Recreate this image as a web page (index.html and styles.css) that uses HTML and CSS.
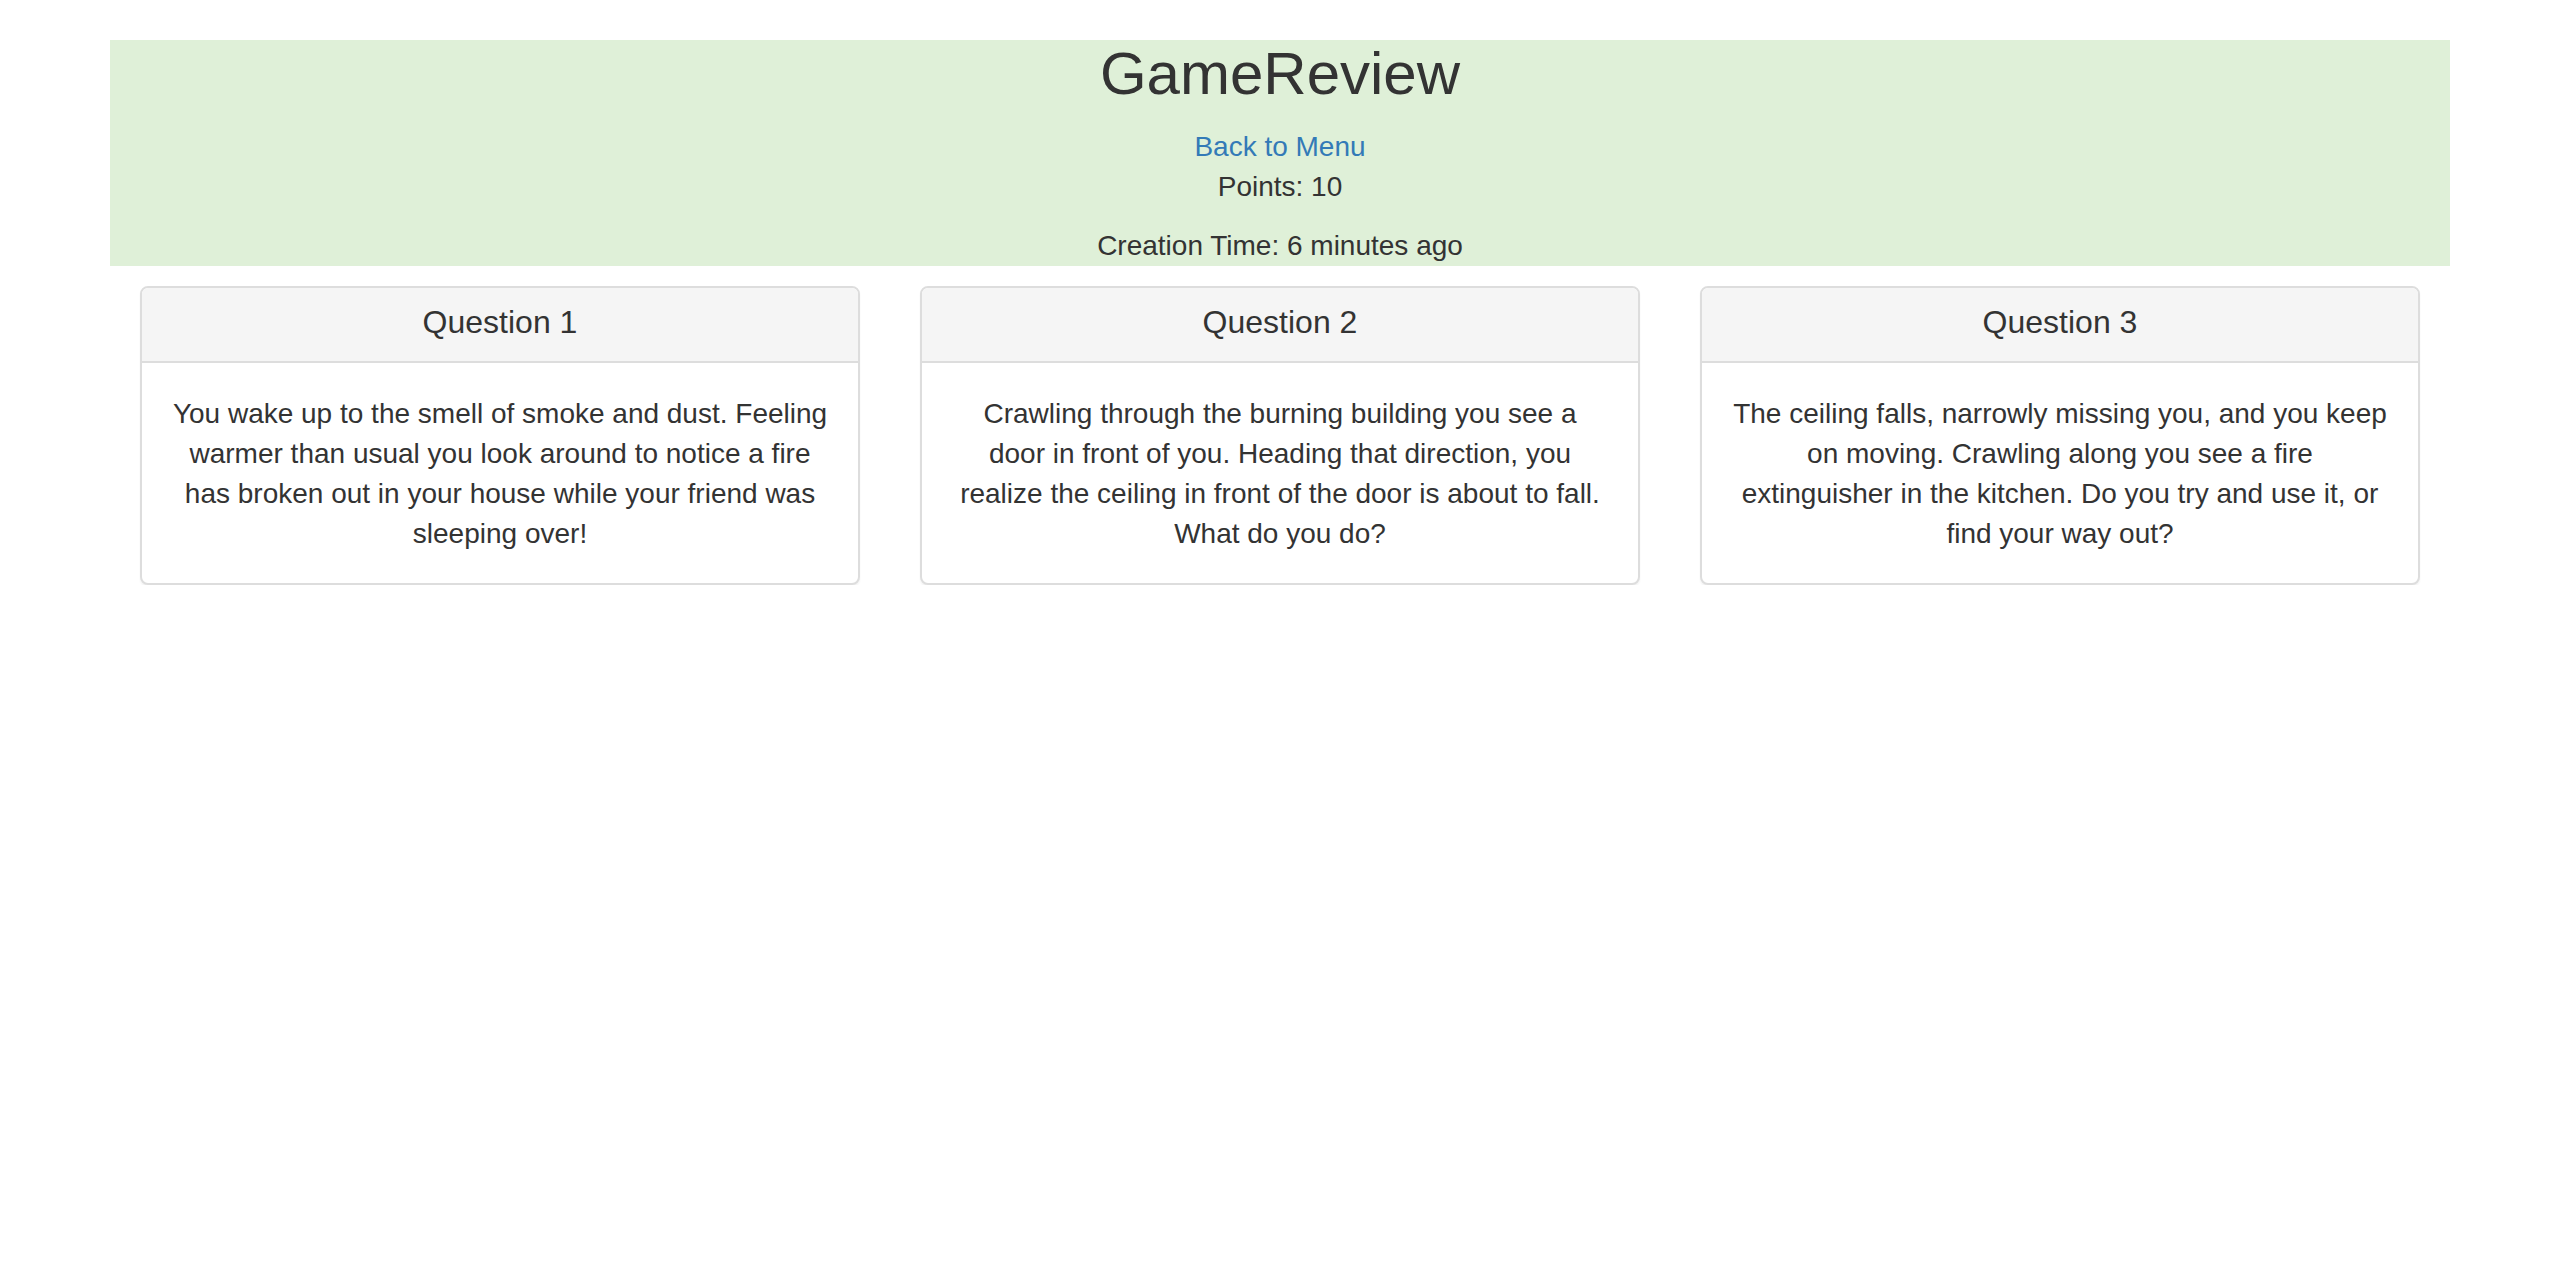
FILE: index.html
```html
<!DOCTYPE html>
<html lang="en">
<head>
<meta charset="utf-8">
<title>GameReview</title>
<link rel="stylesheet" href="styles.css">
</head>
<body>
  <header class="summary">
    <h2 class="summary-title">GameReview</h2>
    <div class="summary-nav"><a class="back-link" href="#">Back to Menu</a></div>
    <p class="summary-points">Points: 10</p>
    <p class="summary-time">Creation Time: 6 minutes ago</p>
  </header>

  <main class="questions">
    <section class="panel">
      <div class="panel-heading"><h3 class="panel-title">Question 1</h3></div>
      <div class="panel-body">You wake up to the smell of smoke and dust. Feeling warmer than usual you look around to notice a fire has broken out in your house while your friend was sleeping over!</div>
    </section>
    <section class="panel">
      <div class="panel-heading"><h3 class="panel-title">Question 2</h3></div>
      <div class="panel-body">Crawling through the burning building you see a door in front of you. Heading that direction, you realize the ceiling in front of the door is about to fall. What do you do?</div>
    </section>
    <section class="panel">
      <div class="panel-heading"><h3 class="panel-title">Question 3</h3></div>
      <div class="panel-body">The ceiling falls, narrowly missing you, and you keep on moving. Crawling along you see a fire extinguisher in the kitchen. Do you try and use it, or find your way out?</div>
    </section>
  </main>
</body>
</html>
```

FILE: styles.css
```css
* {
  box-sizing: border-box;
}

html, body {
  margin: 0;
  padding: 0;
  background: #ffffff;
}

body {
  font-family: "Liberation Sans", Arial, Helvetica, sans-serif;
  font-size: 28px;
  line-height: 40px;
  color: #333333;
}

.summary {
  width: 2340px;
  margin: 40px auto 0;
  padding: 1px 30px 0;
  background: #dff0d8;
  text-align: center;
}

.summary-title {
  margin: 0 0 20px;
  font-size: 60px;
  line-height: 66px;
  font-weight: 400;
  color: #333333;
}

.summary-nav {
  margin: 0;
}

.back-link {
  color: #337ab7;
  text-decoration: none;
}

.summary-points {
  margin: 0 0 19px;
}

.summary-time {
  margin: 0;
}

.questions {
  width: 2280px;
  margin: 20px auto 0;
  display: grid;
  grid-template-columns: repeat(3, 720px);
  column-gap: 60px;
  align-items: start;
}

.panel {
  background: #ffffff;
  border: 2px solid #dddddd;
  border-radius: 8px;
  box-shadow: 0 2px 2px rgba(0, 0, 0, 0.05);
  overflow: hidden;
}

.panel-heading {
  background: #f5f5f5;
  border-bottom: 2px solid #dddddd;
  padding: 18px 30px 22px;
  text-align: center;
}

.panel-title {
  margin: 0;
  font-size: 32px;
  line-height: 33px;
  font-weight: 400;
  color: #333333;
}

.panel-body {
  padding: 31px 30px 29px;
  text-align: center;
}
```
